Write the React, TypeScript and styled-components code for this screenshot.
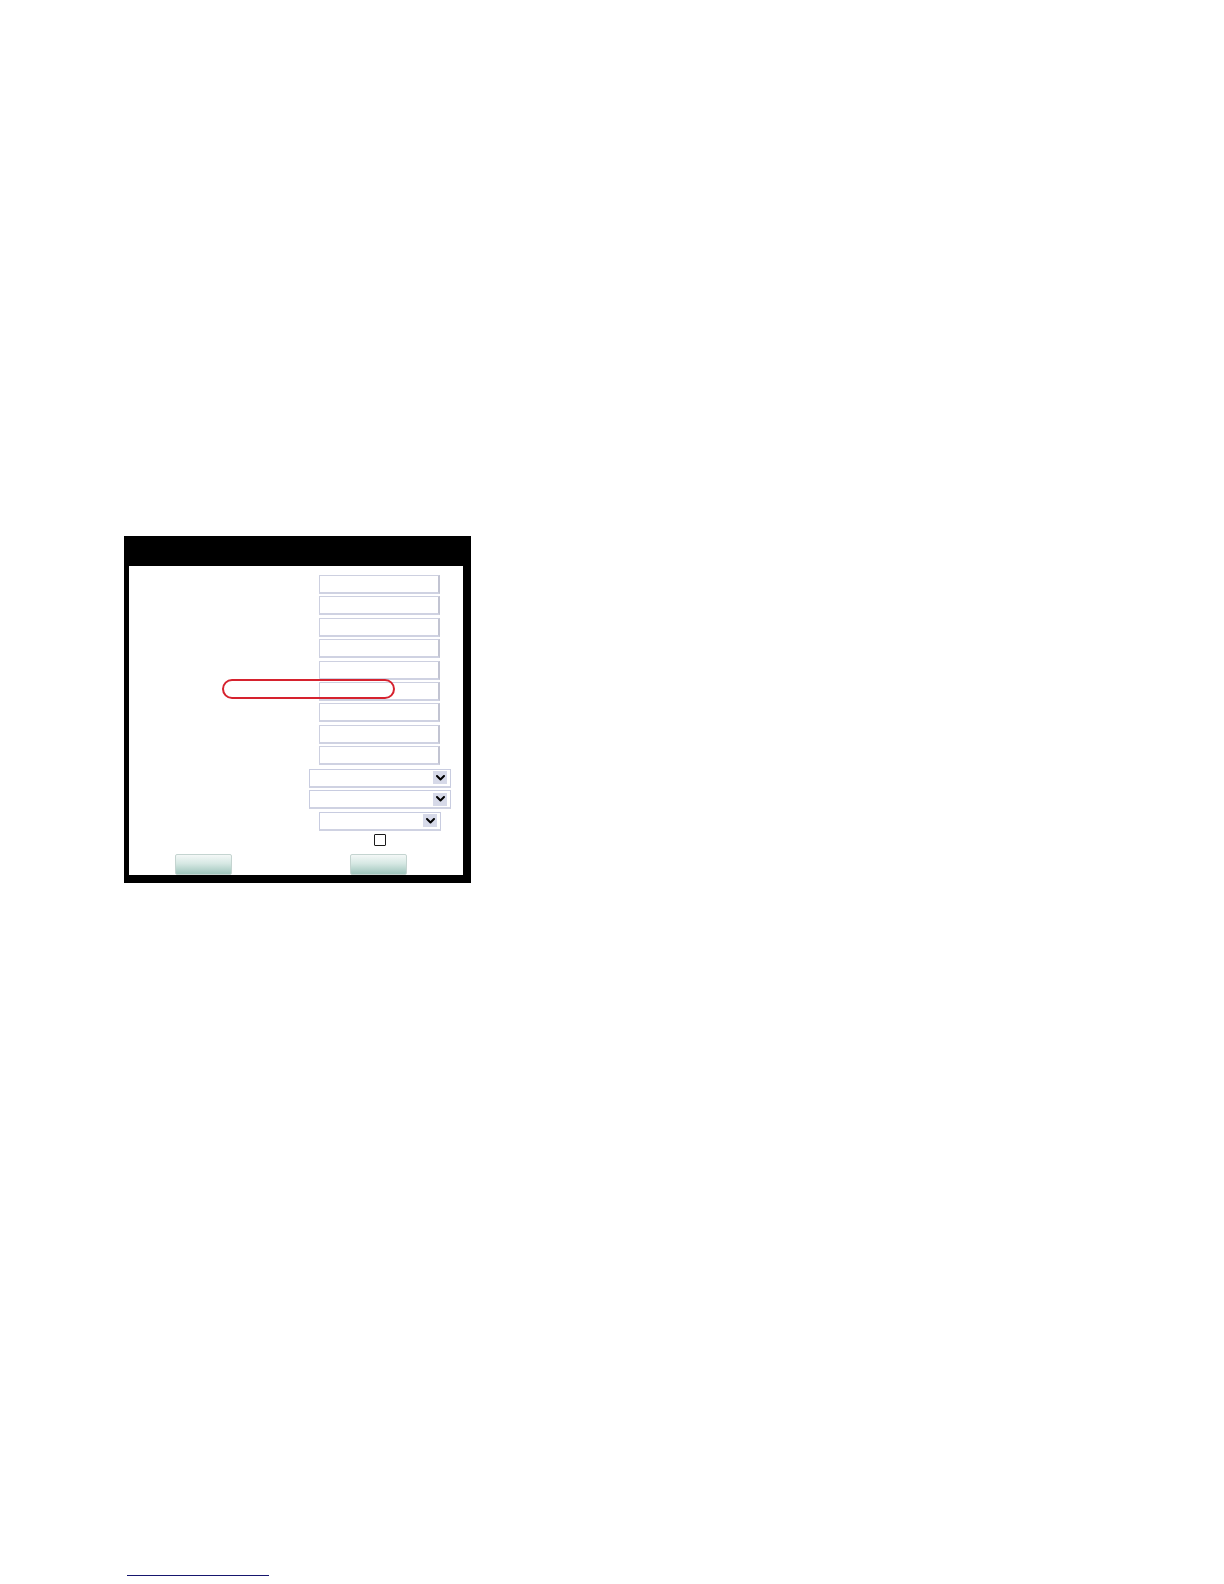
import React from "react";
import styled, { createGlobalStyle } from "styled-components";

const Global = createGlobalStyle`
  html, body { margin: 0; padding: 0; background: #ffffff; }
  body { font-family: "Liberation Sans", Arial, sans-serif; }
`;

const Page = styled.div`
  width: 1224px;
  min-height: 1584px;
  box-sizing: border-box;
  padding: 536px 0 0 124px;
  display: flex;
  flex-direction: column;
`;

const Panel = styled.section`
  width: 347px;
  height: 347px;
  box-sizing: border-box;
  background: #000;
  display: flex;
  flex-direction: column;
  padding: 0 8px 8px 5px;
`;

const Header = styled.div`
  height: 30px;
  flex: none;
  background: #000;
`;

const Body = styled.div`
  position: relative;
  flex: 1;
  background: #fff;
  display: flex;
  flex-direction: column;
  padding-top: 9px;
`;

const Row = styled.div<{ $indent: number; $h: number }>`
  height: ${(p) => p.$h}px;
  flex: none;
  display: flex;
  align-items: flex-start;
  padding-left: ${(p) => p.$indent}px;
`;

const TextInput = styled.input`
  width: 121px;
  height: 19px;
  box-sizing: border-box;
  margin: 0;
  padding: 0 3px;
  background: #fff;
  border: 1px solid #cdd0e0;
  border-right: 2px solid #c2c4d2;
  border-bottom: 2px solid #cfd2e2;
  outline: none;
`;

const SelectBox = styled.div<{ $w: number }>`
  width: ${(p) => p.$w}px;
  height: 19px;
  box-sizing: border-box;
  background: #fff;
  border: 1px solid #c8cce0;
  border-bottom: 2px solid #cfd2e2;
  display: flex;
  align-items: center;
  justify-content: flex-end;
  padding-right: 3px;
`;

const ArrowBox = styled.span`
  width: 14px;
  height: 13px;
  background: #d6d9e8;
  display: flex;
  align-items: center;
  justify-content: center;
`;

const Check = styled.span`
  width: 12px;
  height: 12px;
  box-sizing: border-box;
  border: 1.5px solid #1a1a1a;
  background: #fff;
  border-radius: 1px;
`;

const ButtonRow = styled.div`
  display: flex;
  padding-left: 46px;
  gap: 118px;
  margin-top: 1px;
`;

const Button = styled.button`
  width: 57px;
  height: 21px;
  box-sizing: border-box;
  margin: 0;
  padding: 0;
  border: 1px solid #c4d4d0;
  border-radius: 2px;
  background: linear-gradient(to bottom, #f4f8f7 0%, #d6e8e3 45%, #9fc5bc 100%);
`;

const Oval = styled.div`
  position: absolute;
  left: 93px;
  top: 113px;
  width: 173px;
  height: 20px;
  box-sizing: border-box;
  border: 2px solid #d6222e;
  border-radius: 10px;
  pointer-events: none;
`;

const FootRule = styled.hr`
  margin: 692px 0 0 3px;
  width: 142px;
  height: 0;
  border: none;
  border-top: 1px solid #16166e;
`;

const Chevron = () => (
  <svg width="9" height="6" viewBox="0 0 9 6">
    <path d="M1 1 L4.5 4.5 L8 1" fill="none" stroke="#000" strokeWidth="2" strokeLinecap="round" strokeLinejoin="round" />
  </svg>
);

const Select = ({ w }: { w: number }) => (
  <SelectBox $w={w}>
    <ArrowBox>
      <Chevron />
    </ArrowBox>
  </SelectBox>
);

export default function App() {
  const inputs = Array.from({ length: 9 });
  return (
    <>
      <Global />
      <Page>
        <Panel>
          <Header />
          <Body>
            {inputs.map((_, i) => (
              <Row key={i} $indent={190} $h={21.375}>
                <TextInput type="text" aria-label={`field ${i + 1}`} />
              </Row>
            ))}
            <Row $indent={180} $h={1.6} />
            <Row $indent={180} $h={21.5}>
              <Select w={142} />
            </Row>
            <Row $indent={180} $h={21.5}>
              <Select w={142} />
            </Row>
            <Row $indent={190} $h={22}>
              <Select w={122} />
            </Row>
            <Row $indent={245} $h={19}>
              <Check />
            </Row>
            <ButtonRow>
              <Button type="button" />
              <Button type="button" />
            </ButtonRow>
            <Oval />
          </Body>
        </Panel>
        <FootRule />
      </Page>
    </>
  );
}
